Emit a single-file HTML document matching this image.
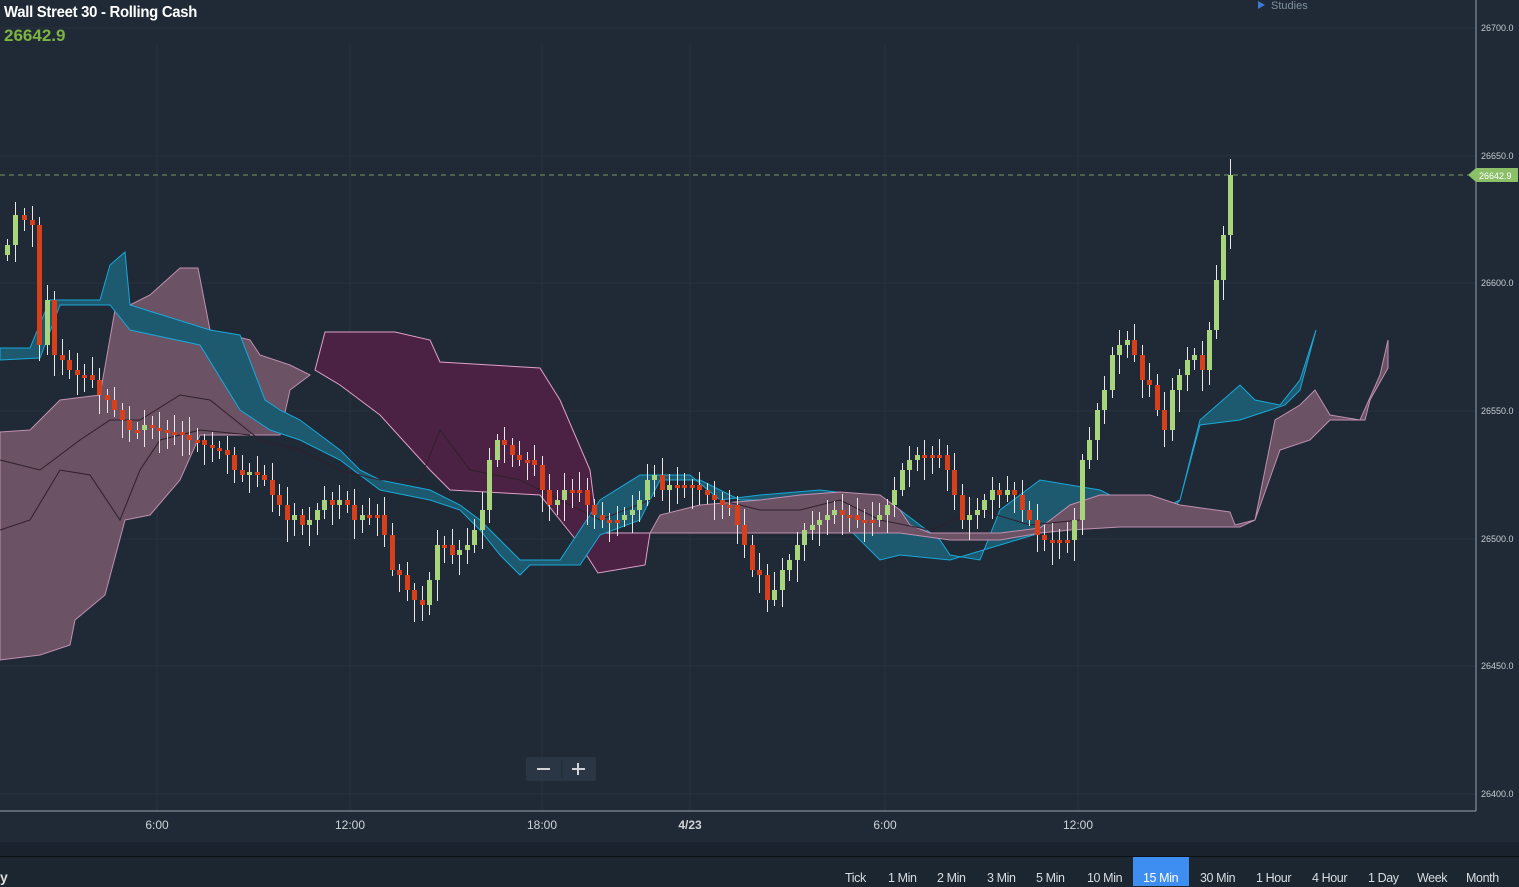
<!DOCTYPE html>
<html><head><meta charset="utf-8"><style>
body{margin:0;width:1519px;height:886px;overflow:hidden;background:#1f2a36;font-family:"Liberation Sans",sans-serif}
#t{position:absolute;left:4px;top:4px;color:#fff;font-weight:bold;font-size:16px;letter-spacing:-0.3px;transform:scaleX(0.93);transform-origin:0 0}
#p{position:absolute;left:4px;top:26px;color:#7cb342;font-weight:bold;font-size:17px}
.ax{position:absolute;font-size:9px;color:#c8ccd0}
.xl{position:absolute;top:818px;font-size:12px;color:#d0d4d8;transform:translateX(-50%)}
#bar{position:absolute;left:0;top:842px;width:1519px;height:44px;background:#1a232d}
#bar2{position:absolute;left:0;top:856px;width:1519px;height:30px;background:#1c2630;border-top:1px solid #0c1116}
.tf{position:absolute;top:871px;font-size:12.5px;color:#d8dce0;letter-spacing:-0.4px}
</style></head><body>
<svg id="s" width="1519" height="886" style="position:absolute;left:0;top:0">
<g stroke="#27333f" stroke-width="1">
<line x1="0" x2="1476" y1="28" y2="28"/><line x1="0" x2="1476" y1="156" y2="156"/><line x1="0" x2="1476" y1="283" y2="283"/><line x1="0" x2="1476" y1="411" y2="411"/><line x1="0" x2="1476" y1="539" y2="539"/><line x1="0" x2="1476" y1="666" y2="666"/><line x1="0" x2="1476" y1="794" y2="794"/>
<line x1="157" x2="157" y1="45" y2="811"/><line x1="350" x2="350" y1="45" y2="811"/><line x1="542" x2="542" y1="45" y2="811"/><line x1="690" x2="690" y1="45" y2="811"/><line x1="885" x2="885" y1="45" y2="811"/><line x1="1078" x2="1078" y1="45" y2="811"/>
</g>
<polygon fill="#6b5264" stroke="#c090b0" points="0,432 30,430 60,400 100,395 115,310 130,305 150,295 180,268 198,268 210,330 250,340 260,355 290,365 310,375 290,390 280,435 200,435 180,480 150,515 125,520 105,595 75,620 70,645 40,655 0,660"/>
<polygon fill="#4b2243" stroke="#e0a0c8" points="315,370 325,332 395,332 430,340 440,362 540,368 560,400 590,470 598,533 650,533 645,565 598,573 580,545 560,520 540,495 450,490 430,470 380,415 340,385"/>
<polygon fill="#1d5a70" stroke="#1aa8d8" points="0,348 30,348 50,300 100,300 110,265 125,252 130,305 210,330 240,335 265,400 280,410 300,420 340,450 360,470 380,480 430,490 460,505 480,520 520,560 560,560 580,530 600,500 640,475 690,475 720,500 760,495 820,490 860,495 900,510 920,525 940,540 950,555 980,560 1000,510 1040,480 1100,490 1150,515 1180,500 1200,420 1240,385 1255,400 1280,405 1300,380 1316,330 1300,390 1285,405 1240,420 1200,425 1180,500 1160,525 1120,510 1070,510 1050,530 1000,545 950,560 900,555 880,560 850,530 820,520 780,500 740,500 700,480 660,480 640,520 600,535 580,565 530,565 520,575 500,555 480,530 460,510 430,500 380,490 340,460 300,440 270,430 240,410 200,345 130,330 110,305 60,305 40,358 0,360"/>
<polygon fill="#6b5264" stroke="#c090b0" points="650,533 660,515 700,505 760,500 800,495 840,492 880,495 900,510 910,525 930,533 1000,533 1040,528 1070,505 1100,495 1150,495 1180,505 1230,512 1235,525 1255,520 1275,420 1300,405 1315,390 1330,415 1360,420 1380,375 1388,340 1388,368 1370,400 1365,420 1330,420 1310,440 1280,450 1255,520 1240,527 1200,527 1120,527 1070,530 1040,533 1000,540 950,540 900,533 800,533 700,533"/>
<polyline fill="none" stroke="#30202b" stroke-width="1" points="0,460 40,470 80,440 110,420 140,420 180,395 210,400 260,440 300,450 340,470 380,480 420,480 440,430 470,470 520,480 560,500 600,520 650,500 700,495 760,510 800,510 840,500 880,520 930,530 980,510 1030,525 1080,520"/>
<polyline fill="none" stroke="#30202b" stroke-width="1" points="0,530 30,520 60,470 90,475 120,520 140,470 160,440 200,430 250,435"/>
<line x1="0" x2="1476" y1="175" y2="175" stroke="#7a9a62" stroke-dasharray="5,4"/>
<g id="c"></g>
<line x1="1476" x2="1476" y1="0" y2="811" stroke="#9aa2aa"/>
<line x1="0" x2="1476" y1="811" y2="811" stroke="#9aa2aa"/>
<polygon fill="#8cc068" points="1468,175 1476,168 1518,168 1518,182 1476,182"/>
<text x="1479" y="179" font-size="9" fill="#fff" font-family="Liberation Sans">26642.9</text>
<rect x="526" y="757" width="70" height="24" rx="2" fill="#2a3643"/>
<line x1="562" x2="562" y1="760" y2="778" stroke="#1f2a36"/>
<rect x="537" y="768" width="13" height="2" fill="#d0d4d8"/><rect x="572" y="768" width="13" height="2" fill="#d0d4d8"/><rect x="577" y="763" width="2" height="12" fill="#d0d4d8"/>
<polygon points="1258,1 1265,5 1258,9" fill="#3a7ad0"/>
<text x="1271" y="9" font-size="11" fill="#8090a0" font-family="Liberation Sans">Studies</text>
</svg>
<div id="t">Wall Street 30 - Rolling Cash</div>
<div id="p">26642.9</div>
<div class="ax" style="left:1481px;top:23px">26700.0</div>
<div class="ax" style="left:1481px;top:151px">26650.0</div>
<div class="ax" style="left:1481px;top:278px">26600.0</div>
<div class="ax" style="left:1481px;top:406px">26550.0</div>
<div class="ax" style="left:1481px;top:534px">26500.0</div>
<div class="ax" style="left:1481px;top:661px">26450.0</div>
<div class="ax" style="left:1481px;top:789px">26400.0</div>
<div class="xl" style="left:157px">6:00</div><div class="xl" style="left:350px">12:00</div><div class="xl" style="left:542px">18:00</div><div class="xl" style="left:690px;font-weight:bold">4/23</div><div class="xl" style="left:885px">6:00</div><div class="xl" style="left:1078px">12:00</div>
<div id="bar"></div><div id="bar2"></div>
<div style="position:absolute;left:0;top:869px;color:#ddd;font-size:14px;font-weight:bold">y</div>
<div style="position:absolute;left:1133px;top:857px;width:56px;height:29px;background:#3d8ef0"></div>
<div class="tf" style="left:845px">Tick</div><div class="tf" style="left:888px">1 Min</div><div class="tf" style="left:937px">2 Min</div><div class="tf" style="left:987px">3 Min</div><div class="tf" style="left:1036px">5 Min</div><div class="tf" style="left:1087px">10 Min</div><div class="tf" style="left:1143px;color:#fff">15 Min</div><div class="tf" style="left:1200px">30 Min</div><div class="tf" style="left:1256px">1 Hour</div><div class="tf" style="left:1312px">4 Hour</div><div class="tf" style="left:1368px">1 Day</div><div class="tf" style="left:1417px">Week</div><div class="tf" style="left:1466px">Month</div>
<script>
var d=[[5,245],[13,215],[22,220],[30,225],[37,345],[45,300],[52,355],[60,360],[67,370],[75,375],[82,375],[90,380],[97,395],[105,400],[112,410],[120,420],[127,430],[135,430],[142,425],[150,428],[157,430],[165,432],[172,432],[180,435],[187,440],[195,440],[202,445],[210,448],[217,450],[225,455],[232,470],[240,475],[247,472],[255,475],[262,480],[270,495],[277,505],[285,520],[292,515],[300,525],[307,520],[315,510],[322,500],[330,505],[337,500],[345,505],[352,520],[360,515],[367,515],[375,515],[382,535],[390,570],[397,575],[405,590],[412,600],[420,605],[427,580],[435,545],[442,545],[450,555],[457,550],[465,545],[472,530],[480,510],[487,460],[495,440],[502,445],[510,455],[517,460],[525,460],[532,465],[540,490],[547,505],[555,500],[562,490],[570,490],[577,490],[585,505],[592,515],[600,520],[607,520],[615,520],[622,515],[630,510],[637,500],[645,480],[652,475],[660,490],[667,485],[675,485],[682,485],[690,485],[697,490],[705,495],[712,500],[720,505],[727,505],[735,525],[742,545],[750,570],[757,575],[765,600],[772,590],[780,570],[787,560],[795,545],[802,530],[810,525],[817,520],[825,515],[832,510],[840,515],[847,515],[855,520],[862,520],[870,520],[877,515],[885,505],[892,490],[900,470],[907,460],[915,455],[922,455],[930,455],[937,455],[945,470],[952,495],[960,520],[967,515],[975,510],[982,500],[990,490],[997,495],[1005,490],[1012,495],[1020,510],[1027,520],[1035,535],[1042,540],[1050,540],[1057,540],[1065,540],[1072,520],[1080,460],[1087,440],[1095,410],[1102,390],[1110,355],[1117,345],[1125,340],[1132,355],[1140,380],[1147,385],[1155,410],[1162,430],[1170,390],[1177,375],[1185,360],[1192,355],[1200,370],[1207,330],[1214,280],[1221,235],[1228,175]];
var h='',prev=255;
for(var i=0;i<d.length;i++){var x=d[i][0],c=d[i][1],o=prev,up=c<o;var t=Math.min(o,c),b=Math.max(o,c);if(b-t<3)b=t+3;
var w1=t-6-(i*7%13),w2=b+6+(i*11%17);var col=up?'#a8d47c':'#d8401c';
h+='<line x1="'+(x+2.5)+'" x2="'+(x+2.5)+'" y1="'+w1+'" y2="'+w2+'" stroke="#e8e8e8" stroke-width="1"/>';
h+='<rect x="'+x+'" y="'+t+'" width="5" height="'+(b-t)+'" fill="'+col+'"/>';prev=c;}
document.getElementById('c').innerHTML=h;
</script>
</body></html>
